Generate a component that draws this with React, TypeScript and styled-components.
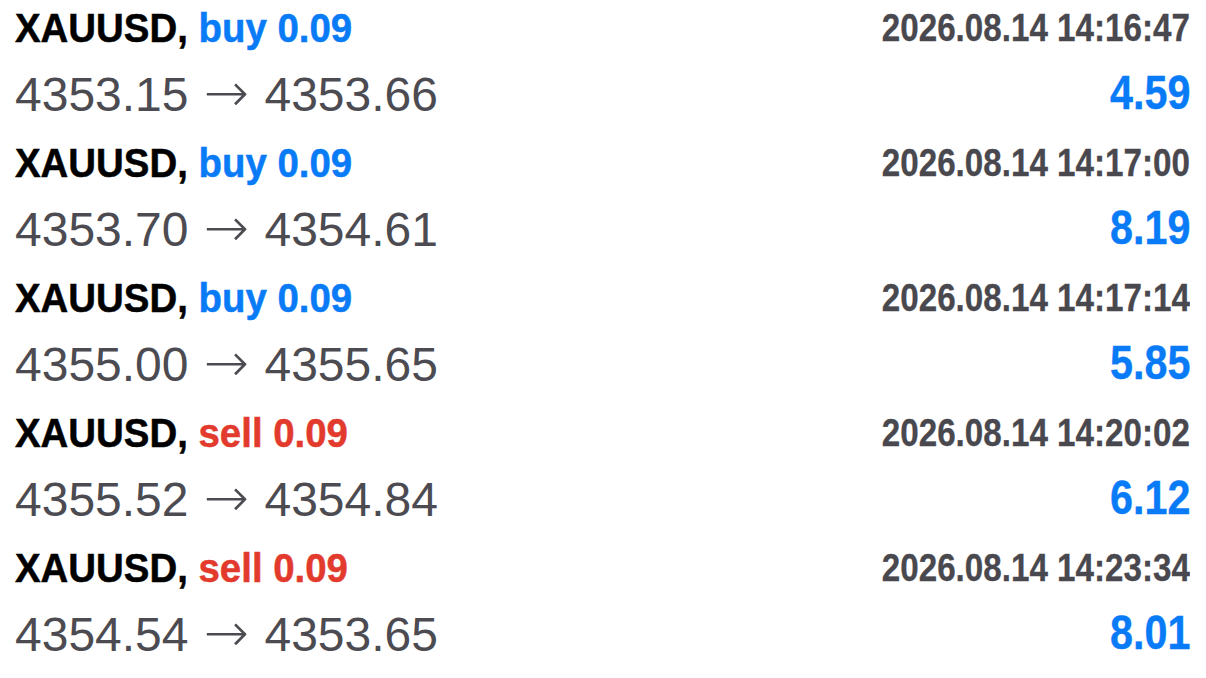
import React from "react";
import styled, { createGlobalStyle } from "styled-components";

const GlobalStyle = createGlobalStyle`
  html, body {
    margin: 0;
    padding: 0;
    background: #ffffff;
  }
  body {
    font-family: "Liberation Sans", Arial, sans-serif;
  }
`;

type Side = "buy" | "sell";

interface Deal {
  symbol: string;
  side: Side;
  volume: string;
  open: string;
  close: string;
  time: string;
  profit: string;
}

const deals: Deal[] = [
  { symbol: "XAUUSD", side: "buy", volume: "0.09", open: "4353.15", close: "4353.66", time: "2026.08.14 14:16:47", profit: "4.59" },
  { symbol: "XAUUSD", side: "buy", volume: "0.09", open: "4353.70", close: "4354.61", time: "2026.08.14 14:17:00", profit: "8.19" },
  { symbol: "XAUUSD", side: "buy", volume: "0.09", open: "4355.00", close: "4355.65", time: "2026.08.14 14:17:14", profit: "5.85" },
  { symbol: "XAUUSD", side: "sell", volume: "0.09", open: "4355.52", close: "4354.84", time: "2026.08.14 14:20:02", profit: "6.12" },
  { symbol: "XAUUSD", side: "sell", volume: "0.09", open: "4354.54", close: "4353.65", time: "2026.08.14 14:23:34", profit: "8.01" },
];

const List = styled.div`
  display: flex;
  flex-direction: column;
  padding: 0 16px 0 15px;
`;

const Row = styled.div`
  display: flex;
  flex-direction: column;
  height: 135px;
`;

const TopLine = styled.div`
  display: flex;
  justify-content: space-between;
  align-items: center;
  height: 56px;
`;

const BottomLine = styled.div`
  display: flex;
  justify-content: space-between;
  align-items: center;
  height: 72px;
`;

// condensed bold look: wide face squeezed horizontally
const Title = styled.div`
  font-weight: 700;
  font-size: 40px;
  color: #000000;
  white-space: nowrap;
  -webkit-text-stroke: 0.5px currentColor;
  transform: scaleX(0.96);
  transform-origin: left center;
`;

const Side = styled.span<{ $side: Side }>`
  color: ${(p) => (p.$side === "buy" ? "#0a7bf7" : "#e23b2d")};
`;

const Time = styled.div`
  font-weight: 700;
  font-size: 38px;
  color: #49484e;
  white-space: nowrap;
  -webkit-text-stroke: 0.3px currentColor;
  transform: scaleX(0.873);
  transform-origin: right center;
`;

const Prices = styled.div`
  font-size: 48px;
  color: #4c4b51;
  white-space: nowrap;
`;

const Arrow = styled.span`
  font-family: "DejaVu Sans", sans-serif;
  font-weight: 200;
  font-size: 54px;
  margin: 0 2px;
`;

const Profit = styled.div`
  font-weight: 700;
  font-size: 48px;
  color: #0a7bf7;
  white-space: nowrap;
  -webkit-text-stroke: 0.4px currentColor;
  transform: scaleX(0.86);
  transform-origin: right center;
`;

const App = () => {
  return (
    <>
      <GlobalStyle />
      <List>
        {deals.map((d, i) => (
          <Row key={i}>
            <TopLine>
              <Title>
                {d.symbol}, <Side $side={d.side}>{d.side} {d.volume}</Side>
              </Title>
              <Time>{d.time}</Time>
            </TopLine>
            <BottomLine>
              <Prices>
                {d.open} <Arrow>→</Arrow> {d.close}
              </Prices>
              <Profit>{d.profit}</Profit>
            </BottomLine>
          </Row>
        ))}
      </List>
    </>
  );
};

export default App;
